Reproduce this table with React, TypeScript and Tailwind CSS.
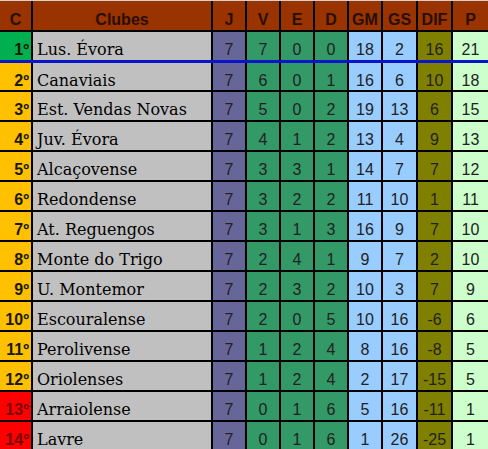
import React from "react";

type Row = {
  pos: number;
  club: string;
  j: number;
  v: number;
  e: number;
  d: number;
  gm: number;
  gs: number;
  dif: number;
  p: number;
};

const rows: Row[] = [
  { pos: 1, club: "Lus. Évora", j: 7, v: 7, e: 0, d: 0, gm: 18, gs: 2, dif: 16, p: 21 },
  { pos: 2, club: "Canaviais", j: 7, v: 6, e: 0, d: 1, gm: 16, gs: 6, dif: 10, p: 18 },
  { pos: 3, club: "Est. Vendas Novas", j: 7, v: 5, e: 0, d: 2, gm: 19, gs: 13, dif: 6, p: 15 },
  { pos: 4, club: "Juv. Évora", j: 7, v: 4, e: 1, d: 2, gm: 13, gs: 4, dif: 9, p: 13 },
  { pos: 5, club: "Alcaçovense", j: 7, v: 3, e: 3, d: 1, gm: 14, gs: 7, dif: 7, p: 12 },
  { pos: 6, club: "Redondense", j: 7, v: 3, e: 2, d: 2, gm: 11, gs: 10, dif: 1, p: 11 },
  { pos: 7, club: "At. Reguengos", j: 7, v: 3, e: 1, d: 3, gm: 16, gs: 9, dif: 7, p: 10 },
  { pos: 8, club: "Monte do Trigo", j: 7, v: 2, e: 4, d: 1, gm: 9, gs: 7, dif: 2, p: 10 },
  { pos: 9, club: "U. Montemor", j: 7, v: 2, e: 3, d: 2, gm: 10, gs: 3, dif: 7, p: 9 },
  { pos: 10, club: "Escouralense", j: 7, v: 2, e: 0, d: 5, gm: 10, gs: 16, dif: -6, p: 6 },
  { pos: 11, club: "Perolivense", j: 7, v: 1, e: 2, d: 4, gm: 8, gs: 16, dif: -8, p: 5 },
  { pos: 12, club: "Oriolenses", j: 7, v: 1, e: 2, d: 4, gm: 2, gs: 17, dif: -15, p: 5 },
  { pos: 13, club: "Arraiolense", j: 7, v: 0, e: 1, d: 6, gm: 5, gs: 16, dif: -11, p: 1 },
  { pos: 14, club: "Lavre", j: 7, v: 0, e: 1, d: 6, gm: 1, gs: 26, dif: -25, p: 1 },
];

const cols =
  "grid grid-cols-[31px_178px_32px_32px_32px_32px_32px_33px_33px_35px] gap-x-[2px]";

function posColor(pos: number) {
  if (pos === 1) return "bg-[#00b050]";
  if (pos >= 13) return "bg-[#ff0000]";
  return "bg-[#ffc000]";
}

export default function App() {
  const num =
    "flex items-center justify-center pt-[8px] leading-[16px] text-[16px] text-[#222]";
  return (
    <div
      className="w-[488px] h-[449px] overflow-hidden bg-black border-t border-[#d8d0c8]"
      style={{ fontFamily: '"Liberation Sans", Arial, sans-serif' }}
    >
      {/* Header */}
      <div className={`${cols} h-[29px] font-bold text-[16px] leading-[16px] text-[#2a0e00]`}>
        {["C", "Clubes", "J", "V", "E", "D", "GM", "GS", "DIF", "P"].map((h) => (
          <div key={h} className="bg-[#993300] flex items-center justify-center pt-[8px]">
            {h}
          </div>
        ))}
      </div>

      {rows.map((r) => (
        <React.Fragment key={r.pos}>
          {/* linha azul depois do líder */}
          {r.pos === 2 ? (
            <div className="h-[3px] bg-[#0a14c8]" />
          ) : (
            <div className="h-[2px]" />
          )}
          <div className={`${cols} ${r.pos === 2 ? "h-[27px]" : "h-[28px]"} overflow-hidden`}>
            <div
              className={`${posColor(r.pos)} flex items-center justify-end pr-[2px] pt-[8px] leading-[16px] font-bold text-[16px] ${
                r.pos >= 13 ? "text-[#7a0000]" : "text-[#1a1a00]"
              }`}
            >
              {r.pos}º
            </div>
            <div
              className="bg-[#c0c0c0] flex items-center pl-[4px] pt-[8px] leading-[16px] text-[16px] text-black"
              style={{ fontFamily: '"DejaVu Serif", serif' }}
            >
              {r.club}
            </div>
            <div className={`bg-[#666699] ${num}`}>{r.j}</div>
            <div className={`bg-[#339966] ${num}`}>{r.v}</div>
            <div className={`bg-[#339966] ${num}`}>{r.e}</div>
            <div className={`bg-[#339966] ${num}`}>{r.d}</div>
            <div className={`bg-[#99ccff] ${num}`}>{r.gm}</div>
            <div className={`bg-[#99ccff] ${num}`}>{r.gs}</div>
            <div className={`bg-[#808000] ${num}`}>{r.dif}</div>
            <div className={`bg-[#ccffcc] ${num}`}>{r.p}</div>
          </div>
        </React.Fragment>
      ))}
    </div>
  );
}
